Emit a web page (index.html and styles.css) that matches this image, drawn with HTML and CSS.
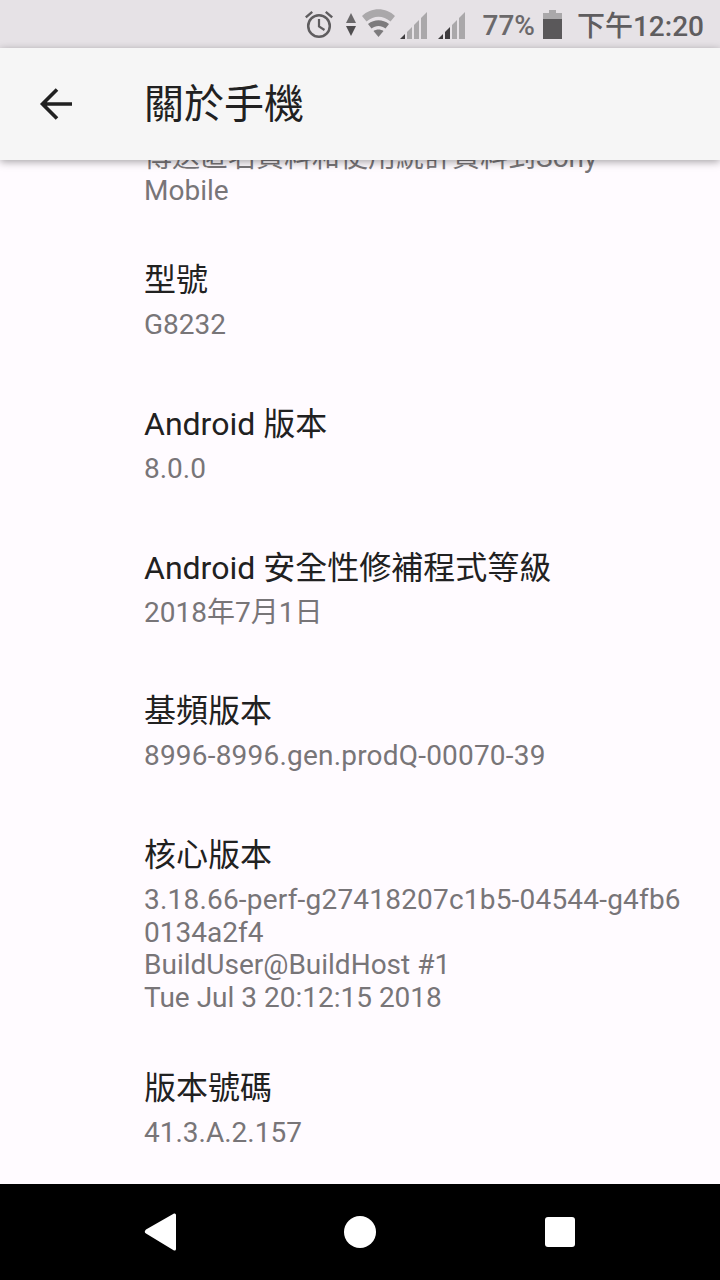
FILE: index.html
```html
<!DOCTYPE html>
<html lang="zh-Hant">
<head>
    <meta charset="UTF-8">
    <meta name="viewport" content="width=device-width, initial-scale=1.0">
    <title>關於手機</title>
    <link rel="stylesheet" href="styles.css">
</head>
<body>
    <div class="phone">
        <!-- Status bar -->
        <div class="status-bar">
            <svg class="ic-alarm" width="30" height="30" viewBox="0 0 30 30">
                <circle cx="15" cy="17" r="10.800" fill="none" stroke="#5f5d5f" stroke-width="2.500"/>
                <path d="M15 10V17.500L20.500 21" fill="none" stroke="#5f5d5f" stroke-width="2.200"/>
                <path d="M1 7.500 7.500 2 9 3.800 2.600 9.300ZM29 7.500 22.500 2 21 3.800 27.400 9.300Z" fill="#5f5d5f"/>
            </svg>
            <svg class="ic-data" width="10" height="23" viewBox="0 0 10 23">
                <path d="M5 0 10 10H0Z" fill="#6b696b"/>
                <path d="M5 23 0 13H10Z" fill="#4f4d4f"/>
            </svg>
            <svg class="ic-wifi" width="33" height="28" viewBox="0 0 33 28">
                <path d="M0 7C9-2 24-2 33 7L28.500 12.500C21 6 12 6 4.500 12.500Z" fill="#aaa8aa"/>
                <path d="M6 15C12.500 10 20.500 10 27 15L23.500 19.500C19.500 16 13.500 16 9.500 19.500Z" fill="#7d7b7d"/>
                <path d="M11.500 22C14.500 20 18.500 20 21.500 22L16.500 28Z" fill="#7d7b7d"/>
            </svg>
            <svg class="ic-signal" width="28" height="28" viewBox="0 0 28 28">
                <path d="M0 28 5 23V28Z" fill="#3f3d3f"/>
                <path d="M7 21 12 16V28H7Z" fill="#aaa8aa"/>
                <path d="M14 14 19 9V28H14Z" fill="#aaa8aa"/>
                <path d="M21 7 27 1V28H21Z" fill="#aaa8aa"/>
            </svg>
            <svg class="ic-signal" width="28" height="28" viewBox="0 0 28 28">
                <path d="M0 28 5 23V28Z" fill="#3f3d3f"/>
                <path d="M7 21 12 16V28H7Z" fill="#3f3d3f"/>
                <path d="M14 14 19 9V28H14Z" fill="#aaa8aa"/>
                <path d="M21 7 27 1V28H21Z" fill="#aaa8aa"/>
            </svg>
            <span class="battery-pct">77%</span>
            <svg class="ic-battery" width="19" height="29" viewBox="0 0 19 29">
                <path d="M6 0H13V3H19V9H0V3H6Z" fill="#aaa8aa"/>
                <rect y="9" width="19" height="20" fill="#5a585a"/>
            </svg>
            <span class="clock">下午12:20</span>
        </div>

        <!-- Toolbar -->
        <header class="toolbar">
            <svg class="ic-back" width="34" height="34" viewBox="0 0 34 34">
                <path d="M33 17H4M18 2.500 3.500 17 18 31.500" fill="none" stroke="#212121" stroke-width="3.600"/>
            </svg>
            <h1 class="toolbar-title">關於手機</h1>
        </header>

        <!-- Settings list, scrolled so the first row sits under the toolbar -->
        <main class="content">
            <div class="list">
                <div class="item item-scrolled">
                    <div class="item-sub">傳送匿名資料和使用統計資料到Sony<br>Mobile</div>
                </div>
                <div class="item">
                    <div class="item-title">型號</div>
                    <div class="item-sub">G8232</div>
                </div>
                <div class="item">
                    <div class="item-title">Android 版本</div>
                    <div class="item-sub">8.0.0</div>
                </div>
                <div class="item">
                    <div class="item-title">Android 安全性修補程式等級</div>
                    <div class="item-sub">2018年7月1日</div>
                </div>
                <div class="item">
                    <div class="item-title">基頻版本</div>
                    <div class="item-sub"><span class="hyphenated">8996-8996.gen.prodQ-00070-39</span></div>
                </div>
                <div class="item">
                    <div class="item-title">核心版本</div>
                    <div class="item-sub"><span class="hyphenated">3.18.66-perf-g27418207c1b5-04544-g4fb6</span><br>0134a2f4<br>BuildUser@BuildHost #1<br>Tue Jul 3 20:12:15 2018</div>
                </div>
                <div class="item">
                    <div class="item-title">版本號碼</div>
                    <div class="item-sub">41.3.A.2.157</div>
                </div>
            </div>
        </main>

        <!-- Navigation bar -->
        <nav class="nav-bar">
            <svg width="34" height="40" viewBox="0 0 34 40">
                <path d="M31 1.500 3 17.500Q0.500 20 3 21.500L31 38.500Q33 39 33 37V3Q33 1 31 1.500Z" fill="#fff"/>
            </svg>
            <div class="nav-home"></div>
            <div class="nav-recent"></div>
        </nav>
    </div>
</body>
</html>
```

FILE: styles.css
```css
/* General page */
body {
    margin: 0;
    font-family: Roboto, "Noto Sans CJK TC", sans-serif;
}

.phone {
    display: flex;
    flex-direction: column;
    width: 720px;
    height: 1280px;
    overflow: hidden;
    background-color: #fffbff;
}

/* Status bar */
.status-bar {
    display: flex;
    align-items: center;
    justify-content: flex-end;
    flex: 0 0 48px;
    padding-right: 16px;
    background-color: #e6e2e6;
    color: #5f5d5f;
    box-sizing: border-box;
}

.status-bar svg {
    flex: none;
}

.ic-data {
    margin-left: 12px;
}

.ic-wifi {
    margin-left: 6px;
    margin-bottom: 2px;
}

.ic-signal {
    margin-left: 5px;
    margin-top: 1px;
}

.ic-signal + .ic-signal {
    margin-left: 10px;
}

.battery-pct {
    margin-left: 17px;
    margin-top: 2px;
    font-size: 28px;
    font-weight: 500;
    color: #6b696b;
}

.ic-battery {
    margin-left: 8px;
}

.clock {
    margin-left: 15px;
    font-size: 28px;
    font-weight: 500;
}

/* Toolbar */
.toolbar {
    position: relative;
    z-index: 2;
    display: flex;
    align-items: center;
    flex: 0 0 112px;
    padding-left: 39px;
    background-color: #f6f6f6;
    box-shadow: 0 2px 8px rgba(0, 0, 0, 0.35);
}

.toolbar-title {
    margin: 0 0 6px 71px;
    font-size: 40px;
    font-weight: 400;
    color: #212121;
}

/* List */
.content {
    flex: 1;
    overflow: hidden;
}

.list {
    margin-top: -27px;
}

.item {
    box-sizing: border-box;
    min-height: 143.75px;
    padding: 31px 32px 23px 144px;
}

.item-scrolled {
    min-height: 0;
    padding-top: 0;
    padding-bottom: 22px;
}

.item-title {
    font-size: 32px;
    line-height: 40px;
    color: #212121;
}

.item-sub {
    font-size: 28px;
    line-height: 32.5px;
    color: #787578;
    margin-top: 9px;
}

.hyphenated {
    letter-spacing: 0.2px;
}

/* Navigation bar */
.nav-bar {
    display: flex;
    align-items: center;
    flex: 0 0 96px;
    padding-left: 143px;
    background-color: #000;
}

.nav-home {
    width: 32px;
    height: 32px;
    margin-left: 167px;
    border-radius: 50%;
    background-color: #fff;
}

.nav-recent {
    width: 30px;
    height: 30px;
    margin-left: 169px;
    border-radius: 3px;
    background-color: #fff;
}
```
